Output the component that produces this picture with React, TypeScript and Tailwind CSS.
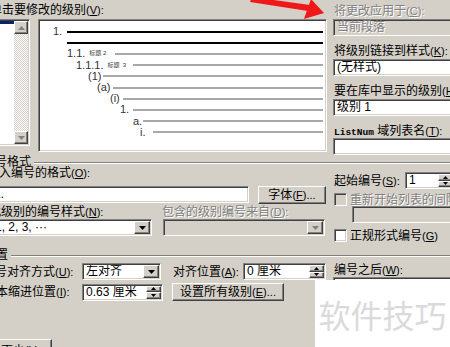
import React from "react";

const sunken =
  "border border-t-[#808080] border-l-[#808080] border-b-white border-r-white shadow-[inset_1px_1px_0_#404040,inset_-1px_-1px_0_#d4d0c8]";
const raised =
  "border border-t-white border-l-white border-b-[#404040] border-r-[#404040] shadow-[inset_-1px_-1px_0_#808080] bg-[#d4d0c8]";
const grayText = "text-[#808080] [text-shadow:1px_1px_0_#fff]";

function Acc({ k, tail = ":" }: { k: string; tail?: string }) {
  return (
    <span className="text-[11px]">
      (<span className="underline">{k}</span>){tail}
    </span>
  );
}

function Tri({ up, color = "#000", small }: { up?: boolean; color?: string; small?: boolean }) {
  const w = small ? 5 : 7;
  const h = small ? 3 : 4;
  return (
    <svg width={w} height={h} viewBox={`0 0 ${w} ${h}`}>
      <path d={up ? `M${w / 2} 0L${w} ${h}H0z` : `M0 0H${w}L${w / 2} ${h}z`} fill={color} />
    </svg>
  );
}

function Combo({ text, cls, disabled }: { text: string; cls: string; disabled?: boolean }) {
  return (
    <div className={`${sunken} ${disabled ? "bg-[#d4d0c8]" : "bg-white"} h-[17px] flex p-px shrink-0 ${cls}`}>
      <div className="flex-1 min-w-0 pl-[2px] leading-[13px] whitespace-nowrap overflow-hidden">{text}</div>
      <div className={`${raised} w-[16px] flex items-center justify-center`}>
        <Tri color={disabled ? "#808080" : "#000"} />
      </div>
    </div>
  );
}

function Spin({ text, cls }: { text: string; cls: string }) {
  return (
    <div className={`${sunken} bg-white h-[17px] flex p-px shrink-0 ${cls}`}>
      <div className="flex-1 min-w-0 pl-[2px] leading-[13px] whitespace-nowrap overflow-hidden">{text}</div>
      <div className="w-[15px] flex flex-col">
        <div className={`${raised} flex-1 flex items-center justify-center`}>
          <Tri up small />
        </div>
        <div className={`${raised} flex-1 flex items-center justify-center`}>
          <Tri small />
        </div>
      </div>
    </div>
  );
}

function Field({ text, cls, disabled }: { text?: React.ReactNode; cls: string; disabled?: boolean }) {
  return (
    <div
      className={`${sunken} ${disabled ? `bg-[#d4d0c8] ${grayText}` : "bg-white"} h-[17px] px-[3px] leading-[15px] whitespace-nowrap shrink-0 ${cls}`}
    >
      {text}
    </div>
  );
}

function Check({ disabled }: { disabled?: boolean }) {
  return <div className={`${sunken} w-[13px] h-[13px] shrink-0 ${disabled ? "bg-[#d4d0c8]" : "bg-white"}`} />;
}

function Section({ text, cls }: { text: string; cls: string }) {
  return (
    <div className="h-[10px] flex items-center">
      <span className={`whitespace-nowrap leading-[10px] ${cls}`}>{text}</span>
      <div className="flex-1 ml-[3px] mt-[2px] border-t border-t-[#808080] border-b border-b-white" />
    </div>
  );
}

function ListBox() {
  return (
    <div className="w-[30px] h-[127px] shrink-0 flex border-t border-r border-b border-t-[#808080] border-r-white border-b-white shadow-[inset_0_1px_0_#404040,inset_-1px_-1px_0_#d4d0c8] py-px pr-px">
      <div className="flex-1 bg-white">
        <div className="h-[3px] bg-[#0a246a]" />
      </div>
      <div className="w-[14px] flex flex-col">
        <div className={`${raised} h-[13px] flex items-center justify-center`}>
          <Tri up color="#808080" />
        </div>
        <div className="flex-1 bg-[image:repeating-conic-gradient(#ffffff_0_25%,#d4d0c8_0_50%)] bg-[length:2px_2px]" />
        <div className={`${raised} h-[13px] flex items-center justify-center`}>
          <Tri color="#808080" />
        </div>
      </div>
    </div>
  );
}

const rows = [
  { pad: "pl-[14px]", lw: "w-[14px]", label: "1.", sub: "", dark: true },
  { pad: "pl-[28px]", lw: "w-0", label: "", sub: "", dark: true },
  { pad: "pl-[28px]", lw: "w-[48px]", label: "1.1.", sub: "标题 2", dark: false },
  { pad: "pl-[37px]", lw: "w-[57px]", label: "1.1.1.", sub: "标题  3", dark: false },
  { pad: "pl-[49px]", lw: "w-[15px]", label: "(1)", sub: "", dark: false },
  { pad: "pl-[58px]", lw: "w-[16px]", label: "(a)", sub: "", dark: false },
  { pad: "pl-[71px]", lw: "w-[13px]", label: "(i)", sub: "", dark: false },
  { pad: "pl-[81px]", lw: "w-[13px]", label: "1.", sub: "", dark: false },
  { pad: "pl-[94px]", lw: "w-[10px]", label: "a.", sub: "", dark: false },
  { pad: "pl-[101px]", lw: "w-[13px]", label: "i.", sub: "", dark: false },
];

function Preview() {
  return (
    <div className={`${sunken} bg-white ml-[8px] w-[289px] h-[133px] shrink-0 pt-[6px] pr-[3px]`}>
      {rows.map((r, i) => (
        <div key={i} className={`flex items-center h-[11.2px] ${r.pad}`}>
          <div className={`${r.lw} shrink-0 flex items-center whitespace-nowrap text-[#333] text-[11px] leading-[11px]`}>
            {r.label}
            {r.sub && <span className="ml-[4px] text-[6px] whitespace-pre">{r.sub}</span>}
          </div>
          <div className={`flex-1 h-[2px] ${r.dark ? "bg-black" : "bg-[#a8a8a8]"}`} />
        </div>
      ))}
    </div>
  );
}

export default function App() {
  return (
    <div className="relative w-[450px] h-[347px] overflow-hidden bg-[#d4d0c8] text-black text-[12px] font-['Liberation_Sans','Noto_Sans_CJK_SC',sans-serif]">
      {/* level list + preview */}
      <div className="flex h-[157px]">
        <div className="w-[333px] shrink-0 flex flex-col">
          <div className="h-[19px] pt-[3px] leading-[14px] whitespace-nowrap -ml-[10px]">
            单击要修改的级别<Acc k="V" />
          </div>
          <div className="flex items-start">
            <ListBox />
            <Preview />
          </div>
        </div>
        <div className="flex-1 flex flex-col">
          <div className={`mt-[4px] h-[14px] leading-[14px] pl-px whitespace-nowrap ${grayText}`}>
            将更改应用于<Acc k="C" />
          </div>
          <Field cls="mt-px w-[140px]" text="当前段落" disabled />
          <div className="mt-[8px] h-[14px] leading-[14px] pl-px whitespace-nowrap">
            将级别链接到样式<Acc k="K" />
          </div>
          <Field cls="mt-px w-[140px]" text="(无样式)" />
          <div className="mt-[8px] h-[14px] leading-[14px] pl-px whitespace-nowrap">
            要在库中显示的级别<Acc k="H" />
          </div>
          <Field cls="mt-px w-[140px]" text="级别 1" />
          <div className="mt-[8px] h-[14px] leading-[14px] pl-px whitespace-nowrap">
            <span className="font-['Liberation_Mono'] text-[9.5px] font-bold">ListNum</span> 域列表名<Acc k="T" />
          </div>
          <Field cls="w-[140px]" />
        </div>
      </div>

      <Section text="编号格式" cls="-ml-[17px]" />

      {/* number format */}
      <div className="flex">
        <div className="w-[333px] shrink-0 flex flex-col">
          <div className="h-[12px] leading-[12px] whitespace-nowrap -ml-[13px]">
            输入编号的格式<Acc k="O" />
          </div>
          <div className="mt-[7px] flex items-start">
            <Field cls="-ml-[10px] w-[259px]" text="1." />
            <div className={`${raised} ml-[9px] w-[68px] h-[18px] flex items-center justify-center whitespace-nowrap`}>
              字体<Acc k="F" tail="..." />
            </div>
          </div>
          <div className="mt-[2px] h-[12px] leading-[12px] flex whitespace-nowrap">
            <span className="-ml-[11px] w-[173px]">
              此级别的编号样式<Acc k="N" />
            </span>
            <span className={grayText}>
              包含的级别编号来自<Acc k="D" />
            </span>
          </div>
          <div className="mt-px flex">
            <Combo cls="-ml-[9px] w-[161px]" text="1, 2, 3, ···" />
            <Combo cls="ml-[11px] w-[162px]" text="" disabled />
          </div>
        </div>
        <div className="flex-1 flex flex-col">
          <div className="mt-[5px] flex items-center h-[17px]">
            <span className="w-[72px] pl-px whitespace-nowrap">
              起始编号<Acc k="S" />
            </span>
            <Spin cls="w-[50px]" text="1" />
          </div>
          <div className="mt-[4px] flex items-center h-[13px] pl-px whitespace-nowrap">
            <Check disabled />
            <span className={`ml-[3px] ${grayText}`}>
              重新开始列表的间隔<Acc k="R" />
            </span>
          </div>
          <Field cls="ml-[19px] w-[120px]" disabled />
          <div className="mt-[6px] flex items-center h-[13px] pl-px whitespace-nowrap">
            <Check />
            <span className="ml-[3px]">
              正规形式编号<Acc k="G" tail="" />
            </span>
          </div>
        </div>
      </div>

      <div className="mt-[8px]">
        <Section text="位置" cls="-ml-[16px]" />
      </div>

      {/* position */}
      <div className="flex h-[41px]">
        <div className="w-[333px] shrink-0 flex flex-col">
          <div className="mt-[3px] flex items-center h-[17px]">
            <span className="-ml-[17px] w-[99px] shrink-0 whitespace-nowrap">
              编号对齐方式<Acc k="U" />
            </span>
            <Combo cls="w-[79px]" text="左对齐" />
            <span className="ml-[12px] w-[70px] shrink-0 whitespace-nowrap">
              对齐位置<Acc k="A" />
            </span>
            <Spin cls="w-[83px]" text="0 厘米" />
          </div>
          <div className="mt-[3px] flex items-center h-[18px]">
            <span className="-ml-[16px] w-[98px] shrink-0 whitespace-nowrap">
              文本缩进位置<Acc k="I" />
            </span>
            <Spin cls="w-[81px]" text="0.63 厘米" />
            <div className={`${raised} ml-[9px] w-[112px] h-[18px] flex items-center justify-center whitespace-nowrap`}>
              设置所有级别<Acc k="E" tail="..." />
            </div>
          </div>
        </div>
        <div className="flex-1 flex flex-col">
          <div className="mt-[4px] h-[12px] leading-[12px] pl-px whitespace-nowrap">
            编号之后<Acc k="W" />
          </div>
          <Field cls="mt-px w-[140px] h-[24px]" />
        </div>
      </div>

      <div className="mt-[38px] flex">
        <div className={`${raised} -ml-[30px] w-[82px] h-[23px] flex items-center justify-center whitespace-nowrap`}>
          &lt;&lt; 更少<Acc k="L" tail="" />
        </div>
      </div>

      {/* red annotation arrow */}
      <svg className="absolute left-0 top-0" width="330" height="24" viewBox="0 0 330 24">
        <path d="M252 -3L310 5L308 11L250 2z" fill="#f01818" />
        <path d="M311 -1L324 13L304 19z" fill="#f01818" />
      </svg>

      {/* watermark */}
      <div className="absolute right-0 bottom-0 w-[135px] h-[67px] bg-white flex items-center justify-center">
        <span className="text-[32px] leading-none text-[#dadada] font-['Noto_Sans_CJK_SC',sans-serif]">
          软件技巧
        </span>
      </div>
    </div>
  );
}
